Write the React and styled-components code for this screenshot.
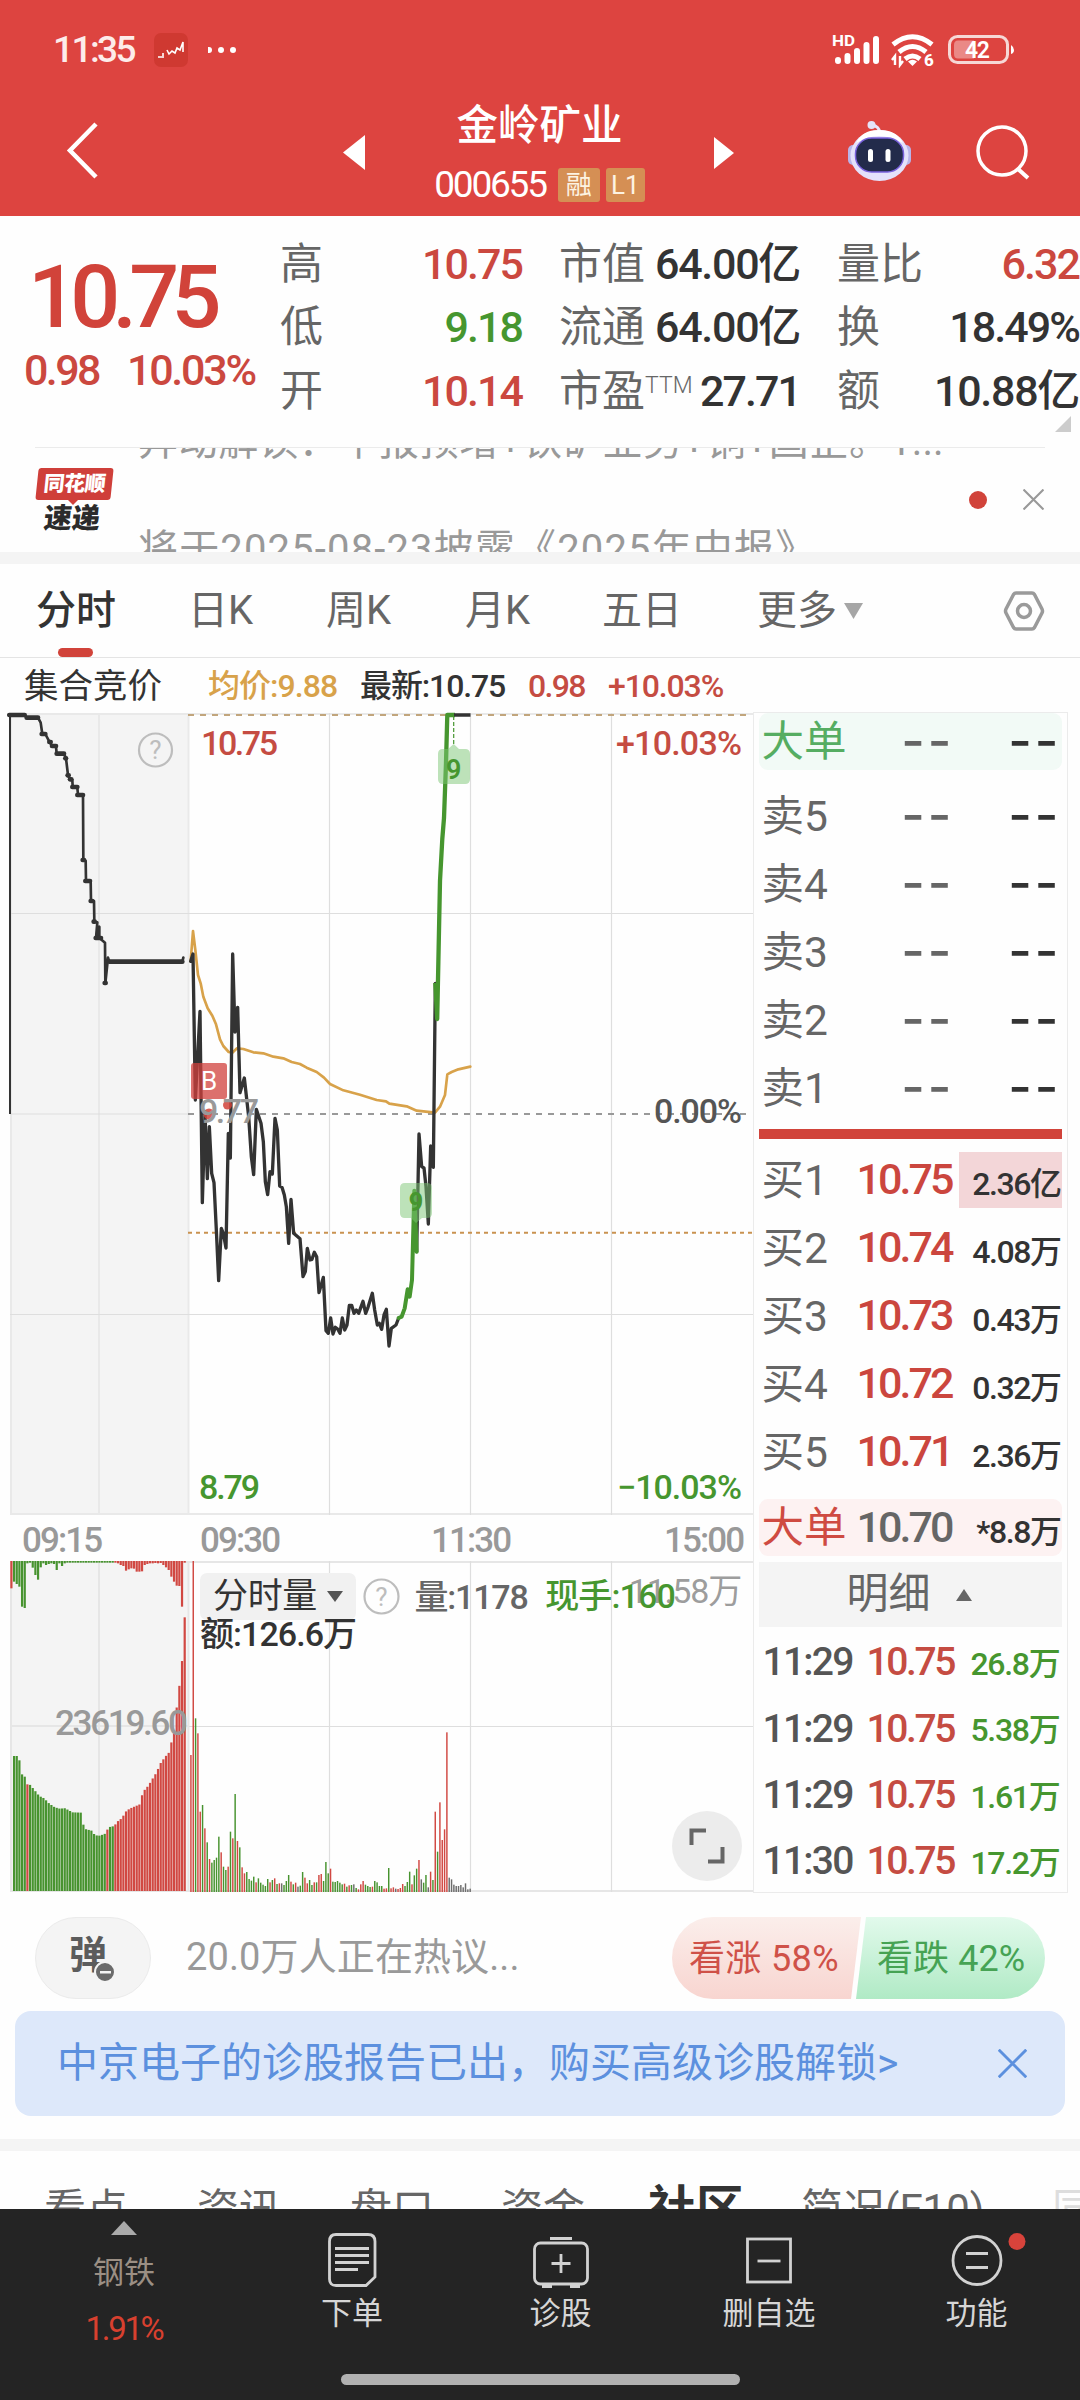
import React from 'react';
import styled, { createGlobalStyle, css } from 'styled-components';

const RED = '#d1433a';
const GREEN = '#46962f';
const INK = '#333333';
const GREY = '#666666';
const PALE = '#999999';
const FONT = 'Roboto, "Noto Sans CJK SC", sans-serif';

const GlobalStyle = createGlobalStyle`
  * { box-sizing: border-box; }
  body { margin: 0; background: #fff; font-family: ${FONT}; line-height: 1.2; }
  svg { display: block; flex: none; }
`;

const Page = styled.div`
  width: 1080px;
  height: 2400px;
  overflow: hidden;
  background: #fefefe;
  display: flex;
  flex-direction: column;
`;

const Txt = styled.span`
  font-size: ${(p) => p.$size || 32}px;
  font-weight: ${(p) => p.$weight || 400};
  color: ${(p) => p.$color || INK};
  letter-spacing: ${(p) => p.$track || 0}em;
  white-space: nowrap;
`;

const Num = styled(Txt)`
  font-weight: ${(p) => p.$weight || 500};
  letter-spacing: ${(p) => (p.$track === undefined ? -0.052 : p.$track)}em;
`;

/* ---------- header ---------- */

const Header = styled.header`
  height: 216px;
  flex: none;
  background: #dd4440;
  color: #fff;
`;

const StatusBar = styled.div`
  height: 100px;
  display: flex;
  align-items: center;
  padding: 0 66px 0 53px;
`;

const StatusGroup = styled.div`
  display: flex;
  align-items: center;
  gap: ${(p) => p.$gap}px;
  margin-left: ${(p) => (p.$end ? 'auto' : 0)};
`;

const NavBar = styled.div`
  height: 116px;
  display: grid;
  grid-template-columns: 343px 391px 1fr;
`;

const NavLeft = styled.div`
  padding: 21px 0 0 66px;
`;

const NavTitle = styled.div`
  display: flex;
  justify-content: space-between;
`;

const TitleStack = styled.div`
  display: flex;
  flex-direction: column;
  align-items: center;
`;

const StockName = styled.div`
  font-size: 41.500px;
  line-height: 51px;
  font-weight: 500;
`;

const CodeRow = styled.div`
  display: flex;
  align-items: center;
  height: 34px;
  margin-top: 17px;
  gap: 6px;
`;

const Badge = styled.span`
  height: 34px;
  width: ${(p) => p.$w}px;
  margin-left: ${(p) => p.$ml || 0}px;
  border-radius: 3px;
  background: #d58f54;
  color: #fdf3e2;
  font-size: 26px;
  line-height: 34px;
  text-align: center;
`;

const NavRight = styled.div`
  display: flex;
  gap: 63px;
  padding: 20px 0 0 114px;
`;

const ArrowBox = styled.div`
  padding-top: ${(p) => p.$top}px;
`;

function StatusIcons() {
  return (
    <svg width="184" height="36" viewBox="830 32 184 36">
      <text x="832" y="46" fontSize="15" fontWeight="700" fill="#fff" textLength="23" lengthAdjust="spacingAndGlyphs">HD</text>
      <g stroke="#fff" strokeWidth="6" strokeLinecap="round">
        <path d="M838 60V61M847.500 56V61M857 51V61M866.500 45V61M876 39V61" />
      </g>
      <g fill="none" stroke="#fff" strokeWidth="5">
        <path d="M893 44.500Q912.500 29 932 44.500" />
        <path d="M899 52Q912.500 41 926 52" />
        <path d="M905 59Q912.500 53 920 59" />
      </g>
      <path d="M908 61.500L912.500 66L917 61.500Q912.500 58 908 61.500Z" fill="#fff" />
      <path d="M895 65V56L892 60M900 56V65L903 61" stroke="#fff" strokeWidth="2.400" fill="none" />
      <text x="924" y="66" fontSize="17" fontWeight="800" fill="#fff">6</text>
      <rect x="949.500" y="36.500" width="58" height="26" rx="8" fill="none" stroke="#f6d8d6" strokeWidth="3" />
      <path d="M958 40.500H974V58.500H958Q954 58.500 954 54V45Q954 40.500 958 40.500Z" fill="#ea8986" />
      <text x="965" y="58" fontSize="23" fontWeight="600" fill="#fff" textLength="25">42</text>
      <path d="M1011 45Q1014 47 1014 50Q1014 53 1011 54Z" fill="#fff" />
    </svg>
  );
}

function Robot() {
  return (
    <svg width="64" height="62" viewBox="848 120 64 62">
      <path d="M880 133Q879 126 872 125" stroke="#e9e6fb" strokeWidth="3" fill="none" />
      <circle cx="871.500" cy="125" r="4" fill="#e5e3f8" />
      <rect x="848" y="145" width="10" height="20" rx="5" fill="#b9b5ea" />
      <rect x="901" y="145" width="10" height="20" rx="5" fill="#b9b5ea" />
      <ellipse cx="879.500" cy="155.500" rx="29" ry="25.500" fill="#e4e1fb" />
      <path d="M856 143Q862 130 879 130Q897 130 903 143Q890 136 879 136Q868 136 856 143Z" fill="#fff" />
      <rect x="855.500" y="138" width="48" height="34" rx="16" fill="#232b4b" stroke="#7a62dd" strokeWidth="1.500" />
      <rect x="868" y="149" width="5" height="13" rx="2.500" fill="#fff" />
      <rect x="885.500" y="149" width="5" height="13" rx="2.500" fill="#fff" />
    </svg>
  );
}

function AppHeader() {
  return (
    <Header>
      <StatusBar>
        <StatusGroup $gap={20}>
          <Num $size={37} $color="#fdecea" $track={-0.07}>11:35</Num>
          <svg width="34" height="34" viewBox="0 0 34 34">
            <rect width="34" height="34" rx="7" fill="#cf3931" />
            <path d="M4 24H8M9 20V25M13 17L15 21L18 18L21 20L23 15L26 17L29 9V19" stroke="#fff" strokeWidth="1.600" fill="none" />
          </svg>
          <svg width="32" height="8" viewBox="0 0 32 8" fill="#fff">
            <circle cx="1" cy="4" r="3" /><circle cx="13" cy="4" r="3" /><circle cx="25" cy="4" r="3" />
          </svg>
        </StatusGroup>
        <StatusGroup $end $gap={10}><StatusIcons /></StatusGroup>
      </StatusBar>
      <NavBar>
        <NavLeft>
          <svg width="34" height="60" viewBox="0 0 34 60"><path d="M30 3L4 29.500L30 56" fill="none" stroke="#fff" strokeWidth="4.500" /></svg>
        </NavLeft>
        <NavTitle>
          <ArrowBox $top={35}><svg width="22" height="35" viewBox="0 0 22 35"><path d="M22 0V35L0 17.500Z" fill="#fff" /></svg></ArrowBox>
          <TitleStack>
            <StockName>金岭矿业</StockName>
            <CodeRow>
              <Num $size={37} $color="#fff" $weight={400} $track={-0.06}>000655</Num>
              <Badge $w={42} $ml={6}>融</Badge>
              <Badge $w={39}>L1</Badge>
            </CodeRow>
          </TitleStack>
          <ArrowBox $top={37}><svg width="20" height="32" viewBox="0 0 20 32"><path d="M0 0L20 16L0 32Z" fill="#fff" /></svg></ArrowBox>
        </NavTitle>
        <NavRight>
          <Robot />
          <svg width="56" height="60" viewBox="974 120 56 60" fill="none" stroke="#fff" strokeWidth="3.500">
            <circle cx="1001" cy="151" r="24" /><path d="M1017 169L1027 178" strokeWidth="4" />
          </svg>
        </NavRight>
      </NavBar>
    </Header>
  );
}

/* ---------- quote ---------- */

const Quote = styled.section`
  height: 231px;
  flex: none;
  display: flex;
`;

const PriceBlock = styled.div`
  width: 280px;
  flex: none;
  padding-top: 35px;
`;

const BigPrice = styled.div`
  font-size: 88px;
  line-height: 91px;
  font-weight: 500;
  letter-spacing: -0.088em;
  color: ${RED};
  padding-left: 28px;
`;

const Change = styled.div`
  display: flex;
  gap: 28px;
  line-height: 50px;
  margin-top: 3px;
  padding-left: 24px;
`;

const Stats = styled.div`
  display: grid;
  grid-template-columns: 242px 241px 242px;
  grid-auto-rows: 63.500px;
  column-gap: 37px;
  padding-top: 17px;
  height: 208px;
`;

const Stat = styled.div`
  display: flex;
  align-items: center;
  justify-content: space-between;
`;

const Sup = styled.sup`
  font-size: 23px;
  font-weight: 300;
  vertical-align: 13px;
  line-height: 0;
`;

const Corner = styled.div`
  width: 0;
  height: 0;
  align-self: flex-end;
  margin: 0 0 15px -24px;
  border-left: 16px solid transparent;
  border-bottom: 16px solid #cccccc;
`;

const STATS = [
  ['高', '10.75', '#cb483f'], ['市值', '64.00亿', INK], ['量比', '6.32', '#cb483f'],
  ['低', '9.18', GREEN], ['流通', '64.00亿', INK], ['换', '18.49%', INK],
  ['开', '10.14', '#cb483f'], ['市盈', '27.71', INK, 'TTM'], ['额', '10.88亿', INK],
];

function QuotePanel() {
  return (
    <Quote>
      <PriceBlock>
        <BigPrice>10.75</BigPrice>
        <Change>
          <Num $size={43} $color="#cb483f" $track={-0.06}>0.98</Num>
          <Num $size={43} $color="#cb483f" $track={-0.052}>10.03%</Num>
        </Change>
      </PriceBlock>
      <Stats>
        {STATS.map(([label, value, color, sup]) => (
          <Stat key={label}>
            <Txt $size={43} $color={GREY}>{label}{sup && <Sup>{sup}</Sup>}</Txt>
            <Num $size={43} $color={color} $track={value.endsWith('亿') ? -0.03 : -0.045}>{value}</Num>
          </Stat>
        ))}
      </Stats>
      <Corner />
    </Quote>
  );
}

/* ---------- news ticker ---------- */

const Ticker = styled.section`
  height: 105px;
  flex: none;
  margin: 0 35px;
  border-top: 1px solid #ebebeb;
  display: flex;
  overflow: hidden;
`;

const NewsLogo = styled.div`
  width: 103px;
  padding-top: 20px;
`;

const LogoTop = styled.div`
  width: 75px;
  height: 32px;
  margin-left: 2px;
  background: #cf3f3a;
  border-radius: 3px;
  transform: skewX(-6deg);
  color: #fff;
  font-size: 21px;
  font-weight: 900;
  line-height: 32px;
  text-align: center;
  letter-spacing: -0.5px;
`;

const LogoTail = styled.div`
  width: 0;
  height: 0;
  margin-left: 33px;
  border: 5px solid transparent;
  border-top-color: #cf3f3a;
  border-bottom-width: 0;
`;

const LogoBottom = styled.div`
  color: #2b2b2b;
  font-size: 28px;
  font-weight: 900;
  line-height: 28px;
  margin: 0 0 0 9px;
  transform: skewX(-6deg);
`;

const TickerLines = styled.div`
  flex: 1;
  margin-top: -34px;
  display: flex;
  flex-direction: column;
  gap: 52px;
`;

const TickerLine = styled.div`
  font-size: 40px;
  line-height: 56px;
  color: ${PALE};
  white-space: nowrap;
  letter-spacing: ${(p) => p.$track || 0}px;
`;

const TickerEnd = styled.div`
  display: flex;
  align-items: center;
  height: 103px;
  gap: 36px;
  margin-right: 1px;
`;

const Dot = styled.div`
  width: 18px;
  height: 18px;
  border-radius: 50%;
  background: ${RED};
`;

function Cross({ size, width, color }) {
  return (
    <svg width={size} height={size} viewBox="0 0 20 20"><path d="M0.500 0.500L19.500 19.500M19.500 0.500L0.500 19.500" stroke={color} strokeWidth={width} /></svg>
  );
}

const Divider = styled.div`
  height: 12px;
  flex: none;
  background: #f4f4f4;
`;

/* ---------- chart tabs ---------- */

const Tabs = styled.nav`
  height: 94px;
  flex: none;
  border-bottom: 1px solid #e4e4e4;
  display: flex;
  padding: 0 35px 0 36px;
`;

const Tab = styled.div`
  width: ${(p) => p.$w}px;
  height: 93px;
  display: flex;
  flex-direction: column;
  justify-content: space-between;
  font-size: 40px;
  line-height: 52px;
  padding-top: 21px;
  color: ${(p) => (p.$on ? INK : GREY)};
  font-weight: ${(p) => (p.$on ? 500 : 400)};
  white-space: nowrap;
`;

const Underline = styled.i`
  width: 35px;
  height: 9px;
  border-radius: 5px;
  margin-left: 22px;
  background: ${RED};
`;

const MoreRow = styled.div`
  display: flex;
  align-items: center;
  gap: 7px;
`;

const TabSettings = styled.div`
  margin-left: auto;
  padding-top: 27px;
`;

const InfoRow = styled.div`
  height: 54px;
  flex: none;
  display: flex;
  align-items: center;
  padding: 1px 0 0 24px;
`;

const InfoCell = styled.div`
  width: ${(p) => p.$w}px;
  display: flex;
  align-items: center;
  height: 54px;
  line-height: 54px;
`;

/* ---------- chart area ---------- */

const Board = styled.section`
  height: 1181px;
  flex: none;
  display: flex;
`;

const ChartColumn = styled.div`
  width: 753px;
  display: flex;
  flex-direction: column;
`;

const TimeAxis = styled.div`
  height: 46px;
  display: grid;
  grid-template-columns: 178px 231px 233px 1fr;
  padding: 0 11px 0 22px;
  line-height: 52px;
`;

const VolumeBox = styled.div`
  position: relative;
  height: 332px;
`;

const VolumeLegend = styled.div`
  position: absolute;
  left: 200px;
  top: 12px;
`;

const LegendRow = styled.div`
  display: flex;
  align-items: center;
  height: ${(p) => p.$h}px;
`;

const Chip = styled.div`
  display: flex;
  align-items: center;
  gap: 10px;
  width: 156px;
  height: 47px;
  padding-left: 13px;
  border-radius: 7px;
  background: #f1f1f1;
  margin-right: 7px;
`;

const Expand = styled.div`
  position: absolute;
  right: 11px;
  bottom: 12px;
  width: 70px;
  height: 70px;
  border-radius: 50%;
  background: #ececec;
  display: flex;
  align-items: center;
  justify-content: center;
`;

const ChartText = styled.text`
  font-family: ${FONT};
  font-size: ${(p) => p.$size || 34}px;
  font-weight: 500;
`;

const PRICE_A = '32,184 39,162 46,600 60,334 67,908 75,640 82,836 88,680 95,820 102,848 109,990 116,1142 124,985 130,1000 138,1044 145,700 151,774 158,162 165,396 173,322 180,578 193,534 206,650 214,770 221,824 229,628 243,670 250,725 256,845 263,884 270,815 277,822 285,655 292,690 299,858 306,862 313,885 319,920 326,1030 333,898 341,1000 348,1006 360,1016 369,1130 376,1115 382,1045 390,1080 396,1078 403,1057 410,1070 417,1178 430,1132 438,1292 445,1300 452,1254 459,1302 466,1282 473,1287 480,1300 487,1254 494,1290 501,1275 508,1216 515,1216 522,1240 529,1230 536,1240 549,1204 557,1240 564,1222 577,1180 584,1230 592,1275 598,1270 605,1288 612,1245 619,1228 627,1338 634,1285 648,1275 656,1254';
const PRICE_B = '710,1055 717,702 725,800 732,804 738,860 745,972 752,738 760,802 766,250';
const PRICE_UP = '656,1254 665,1250 674,1225 683,1168 689,1190 696,1140 703,872 710,1055';
const AVERAGE = '32,184 39,93 46,150 54,225 62,250 70,290 83,325 97,347 108,373 120,418 130,438 146,456 157,458 171,445 190,447 220,457 250,460 280,470 310,475 335,486 360,492 380,503 410,516 432,533 450,552 490,571 540,584 590,600 618,604 628,611 680,619 710,632 765,638 780,620 795,585 802,523 815,516 835,508 871,500';
const AUCTION = '26,45 74,45 80,53 114,53 122,68 127,102 136,102 148,125 156,137 168,140 170,161 192,161 198,175 204,225 210,238 217,240 218,260 232,262 234,285 249,285 250,480 257,482 258,543 272,543 273,603 282,603 283,665 292,667 288,714 298,680 298,714 308,722 315,728 316,850 324,773 328,785 547,785 550,773';
const AUCTION_MARKS = [[28, 45, 74], [80, 53, 114], [125, 102, 136], [148, 126, 152], [156, 138, 168], [170, 161, 192], [196, 175, 198], [203, 226, 206], [210, 238, 214], [217, 261, 232], [232, 285, 249], [248, 480, 252], [256, 543, 270], [272, 603, 277], [281, 665, 284], [287, 714, 303], [314, 849, 317], [328, 785, 547]];

function HelpMark({ cx, cy, r }) {
  return (
    <g>
      <circle cx={cx} cy={cy} r={r - 1} fill="none" stroke="#bdbdbd" strokeWidth="2.200" />
      <text x={cx} y={cy + 9} fontSize="26" textAnchor="middle" fill="#bdbdbd">?</text>
    </g>
  );
}

function PriceChart() {
  return (
    <svg width="753" height="803" viewBox="0 712 753 803">
      <rect x="10" y="713" width="179" height="802" fill="#f4f4f4" />
      <g stroke="#e9e9e9" strokeWidth="2">
        <path d="M11 713V1515M99 713V1515M188.500 713V1515" />
        <path d="M10 714H753M10 1514H753" />
      </g>
      <g stroke="#dedede" strokeWidth="1.200">
        <path d="M10 913.500H753M10 1314.500H753M10 1114H189" />
        <path d="M329.500 713V1515M470.500 713V1515M611.500 713V1515" />
      </g>
      <path d="M188 715H752" stroke="#c1a57c" strokeWidth="2" strokeDasharray="6 6" />
      <path d="M188 1114H752" stroke="#999" strokeWidth="1.800" strokeDasharray="6 6" />
      <path d="M188 1232.700H752" stroke="#c99250" strokeWidth="2" strokeDasharray="4 4" />
      <g transform="translate(0 700) scale(0.333333)" fill="none" stroke="#333" strokeLinejoin="round" strokeLinecap="round">
        <path d="M30 45V1242" strokeWidth="6" strokeLinecap="butt" />
        <polyline points={AUCTION} strokeWidth="8" />
        {AUCTION_MARKS.map(([x, y, x2]) => <path key={`${x}-${y}`} d={`M${x} ${y}H${x2}`} strokeWidth="14" />)}
      </g>
      <g transform="translate(180 900) scale(0.333333)" fill="none" strokeLinejoin="round" strokeLinecap="round">
        <polyline points={AVERAGE} stroke="#d8a24a" strokeWidth="8" />
        <polyline points={PRICE_A} stroke="#333" strokeWidth="10" />
        <polyline points={PRICE_B} stroke="#333" strokeWidth="10" />
        <polyline points={PRICE_UP} stroke={GREEN} strokeWidth="12" />
      </g>
      <path d="M435.300 983L437.200 1019L440 881L442.300 839L444 818L446 763L447.300 715H455" fill="none" stroke={GREEN} strokeWidth="4.300" strokeLinejoin="round" />
      <path d="M454 715H470.500" stroke="#333" strokeWidth="3.500" />
      <path d="M453.700 716V745" stroke={GREEN} strokeWidth="1.200" strokeDasharray="4 2" />
      <g fill="#7cc574" fillOpacity="0.500">
        <path d="M443 749H448L453.700 744L459 749H465Q470 749 470 754V779Q470 784 465 784H443Q438 784 438 779V754Q438 749 443 749Z" />
        <path d="M405 1183H427Q432 1183 432 1188V1213Q432 1218 427 1218H422L416 1223L411 1218H405Q400 1218 400 1213V1188Q400 1183 405 1183Z" />
      </g>
      <text x="453.700" y="779" fontSize="27" fontWeight="600" textAnchor="middle" fill={GREEN}>9</text>
      <text x="416" y="1211" fontSize="25" fontWeight="800" textAnchor="middle" fill={GREEN}>9</text>
      <rect x="191" y="1063" width="36" height="36" rx="3" fill="#d0403c" fillOpacity="0.750" />
      <circle cx="227.500" cy="1105" r="4.500" fill={RED} fillOpacity="0.850" />
      <circle cx="209" cy="1114" r="5.500" fill={RED} fillOpacity="0.850" />
      <text x="209" y="1090" fontSize="26" textAnchor="middle" fill="#fff">B</text>
      <ChartText x="199" y="1123" fill={PALE} textLength="60">9.77</ChartText>
      <HelpMark cx={155.5} cy={750} r={17.5} />
      <ChartText x="201" y="754.500" fill="#c54c42" textLength="77">10.75</ChartText>
      <ChartText x="616" y="754.500" fill="#c54c42" textLength="126">+10.03%</ChartText>
      <ChartText x="654" y="1122.500" fill="#555" textLength="88">0.00%</ChartText>
      <ChartText x="199" y="1499" fill={GREEN} textLength="61">8.79</ChartText>
      <ChartText x="617" y="1499" fill={GREEN} textLength="125">−10.03%</ChartText>
    </svg>
  );
}

/* Envelope of the auction bars, interpolated to one bar each 5.5 units. */
const ENVELOPE = [[22, 828], [38, 828], [42, 880], [50, 890], [53, 913], [60, 913], [70, 930], [80, 948], [90, 955], [100, 970], [112, 982], [125, 987], [130, 983], [140, 990], [148, 997], [168, 998], [172, 1046], [188, 1052], [195, 1066], [205, 1067], [218, 1060], [222, 1042], [235, 1038], [240, 1026], [250, 1015], [260, 992], [268, 985], [289, 972], [293, 937], [305, 917], [315, 893], [322, 877], [330, 850], [340, 830], [348, 817], [353, 784], [358, 755], [362, 700], [368, 630], [374, 555], [380, 412]];

const HANGING = [325, 305, 312, 320, 380, 384, 250, 248, 263, 285, 299, 262, 250, 255, 252, 250, 252, 270, 250, 258, 250, 248, 248, 248, 248, 248, 248, 248, 248, 248, 248, 248, 248, 248, 248, 248, 248, 248, 248, 248, 250, 255, 258, 272, 268, 265, 266, 275, 275, 274, 255, 252, 250, 250, 249, 250, 249, 255, 262, 270, 290, 305, 317, 318, 380, 248];

const MINUTES = 'r825 r243 g715 r760 r995 g975 r1045 g1087 r1137 g1148 g1140 g1133 g1070 r1117 g1160 g1170 r1160 g1055 r1075 g942 r1083 g1102 r1162 r1180 g1176 g1197 g1202 g1190 r1207 g1195 g1208 g1214 g1218 g1197 r1207 g1200 r1195 g1212 r1210 k1210 g1215 g1203 g1185 r1205 g1213 r1208 k1220 g1217 g1176 r1193 r1210 g1200 g1215 r1207 g1207 r1185 r1182 g1203 g1146 g1180 r1166 g1205 g1206 g1203 g1208 g1213 r1211 g1220 r1216 g1215 k1213 g1224 r1228 r1213 r1203 g1214 g1218 g1221 r1220 g1203 g1207 g1218 g1218 r1226 r1225 g1164 r1225 r1222 k1226 r1227 r1224 r1212 g1218 g1206 g1175 r1213 g1186 g1166 r1140 k1198 g1208 g1185 k1222 r1175 g1200 r995 g1115 r967 r1080 r1048 r757 k1193 k1198 k1214 k1218 k1218 k1215 k1222 k1210 k1228 k1226'.split(' ');

const BAR_COLORS = { r: '#d14842', g: '#47932f', k: '#6d6d6d' };

function envelopeAt(x) {
  for (let i = 1; i < ENVELOPE.length; i += 1) {
    const [x0, y0] = ENVELOPE[i - 1];
    const [x1, y1] = ENVELOPE[i];
    if (x <= x1) return y0 + ((x - x0) / (x1 - x0)) * (y1 - y0);
  }
  return 412;
}

function auctionColor(x) {
  if (x > 236) return BAR_COLORS.r;
  if (Math.abs(x - 55) < 2.7 || Math.abs(x - 222) < 2.7) return BAR_COLORS.r;
  return BAR_COLORS.g;
}

function VolumeChart() {
  const px = (x) => x / 2.063;
  const py = (y) => 1480 + y / 3;
  const slots = HANGING.map((y, i) => ({ y, x: 22.5 + i * 5.5 }));
  return (
    <svg width="753" height="332" viewBox="0 1561 753 332">
      <rect x="10" y="1561" width="179" height="330" fill="#f4f4f4" />
      <g stroke="#e6e6e6" strokeWidth="2">
        <path d="M11 1561V1892M99 1561V1892M188.500 1561V1892" />
        <path d="M10 1562H753M10 1891H753M10 1726H189" />
      </g>
      <g stroke="#dedede" strokeWidth="1.200">
        <path d="M189 1726.500H753M329.500 1561V1892M470.500 1561V1892M611.500 1561V1892" />
      </g>
      {slots.slice(1).map(({ x }) => (
        <rect key={x} x={px(x) - 0.6} y={py(envelopeAt(x))} width="2.200" height={1891 - py(envelopeAt(x))} fill={auctionColor(x)} />
      ))}
      {slots.map(({ x, y }, i) => (
        <rect key={x} x={px(x) - 0.6} y="1561" width="2.200" height={py(y) - 1561} fill={i === 0 || x > 236 ? BAR_COLORS.r : BAR_COLORS.g} />
      ))}
      {MINUTES.map((m, i) => {
        const y = py(Number(m.slice(1)));
        return <rect key={i} x={190.2 + i * 2.327} y={y} width="1.450" height={1892 - y} fill={BAR_COLORS[m[0]]} />;
      })}
      <ChartText x="55" y="1735" $size={35} fill={PALE} textLength="133">23619.60</ChartText>
    </svg>
  );
}

const Over = styled.div`
  position: absolute;
  right: 12px;
  top: 6px;
  line-height: 48px;
`;

function Triangle({ w, h, color, up }) {
  return (
    <svg width={w} height={h} viewBox="0 0 10 10" preserveAspectRatio="none">
      <path d={up ? 'M0 10L5 0L10 10Z' : 'M0 0H10L5 10Z'} fill={color} />
    </svg>
  );
}

function VolumePanel() {
  return (
    <VolumeBox>
      <VolumeChart />
      <VolumeLegend>
        <LegendRow $h={47}>
          <Chip><Txt $size={35} $track={-0.01}>分时量</Txt><Triangle w={16} h={11} color="#555" /></Chip>
          <svg width="37" height="37" viewBox="0 0 37 37"><HelpMark cx={18.5} cy={18.5} r={18} /></svg>
          <InfoCell $w={130}><Txt $size={34} $color={GREY} $weight={500} $track={-0.035}>&nbsp;&nbsp;量:1178</Txt></InfoCell>
          <Txt $size={34} $color={GREEN} $weight={500} $track={-0.025}>&nbsp;&nbsp;现手:160</Txt>
        </LegendRow>
        <LegendRow $h={28}><Txt $size={34} $weight={500} $track={-0.028}>额:126.6万</Txt></LegendRow>
      </VolumeLegend>
      <Over><Txt $size={34} $color="rgba(130,130,130,0.8)" $track={-0.035}>11.58万</Txt></Over>
      <Expand>
        <svg width="36" height="36" viewBox="0 0 36 36" fill="none" stroke="#666" strokeWidth="4">
          <path d="M2.500 17V2.500H17M33.500 19V33.500H19" />
        </svg>
      </Expand>
    </VolumeBox>
  );
}

/* ---------- order book ---------- */

const Book = styled.aside`
  width: 315px;
  border: 1.5px solid #ebebeb;
  padding: 0 5.5px 0 4.5px;
  display: flex;
  flex-direction: column;
`;

const BookRow = styled.div`
  height: 68px;
  display: flex;
  align-items: center;
  padding-left: 3px;
  flex: none;
  ${(p) => p.$tint && css`
    height: 57px;
    border-radius: 9px;
    background: ${p.$tint};
  `}
`;

const BookLabel = styled.div`
  width: 95px;
  flex: none;
  font-size: 42.500px;
  color: ${(p) => p.$color || GREY};
  white-space: nowrap;
`;

const BookPrice = styled.div`
  width: 102px;
  flex: none;
  font-size: 43px;
  font-weight: 500;
  letter-spacing: -0.068em;
  color: ${(p) => p.$color || '#cb463e'};
`;

const BookQty = styled.div`
  flex: 1;
  height: 56px;
  line-height: 64px;
  text-align: right;
  padding-right: 1px;
  font-size: 32px;
  font-weight: 500;
  letter-spacing: -0.045em;
  white-space: nowrap;
  color: ${(p) => p.$color || INK};
  background: ${(p) => (p.$hot ? '#f3d6d8' : 'transparent')};
`;

const DashPair = styled.div`
  flex: 1;
  display: grid;
  grid-template-columns: 98px 107px;
`;

const Dashes = styled.div`
  text-align: right;
  font-family: Inter, sans-serif;
  font-size: 51px;
  font-weight: 500;
  letter-spacing: 0.06em;
  line-height: 50px;
  padding-bottom: 2px;
  color: ${(p) => p.$color};
`;

const SideBar = styled.div`
  height: 10px;
  flex: none;
  background: ${RED};
`;

const Gap = styled.div`
  height: ${(p) => p.$h}px;
  flex: none;
`;

const DetailBar = styled.div`
  height: 65px;
  flex: none;
  background: #f4f4f4;
  display: flex;
  align-items: center;
  justify-content: center;
  gap: 25px;
  padding-right: 2px;
`;

const Trade = styled.div`
  height: 66.300px;
  flex: none;
  display: grid;
  grid-template-columns: 104px 88px 1fr;
  align-items: center;
  padding: 5px 0 0 4px;
`;

const TradeText = styled.span`
  font-size: ${(p) => (p.$qty ? 32 : 39)}px;
  font-weight: 500;
  letter-spacing: ${(p) => p.$track}em;
  text-align: ${(p) => (p.$qty ? 'right' : 'left')};
  padding: ${(p) => (p.$qty ? '3px 2px 0 0' : 0)};
  color: ${(p) => p.$color};
  white-space: nowrap;
`;

const BUYS = [['买1', '10.75', '2.36亿'], ['买2', '10.74', '4.08万'], ['买3', '10.73', '0.43万'], ['买4', '10.72', '0.32万'], ['买5', '10.71', '2.36万']];
const TRADES = [['11:29', '26.8万'], ['11:29', '5.38万'], ['11:29', '1.61万'], ['11:30', '17.2万']];

function EmptyQuote() {
  return (
    <DashPair>
      <Dashes $color={GREY}>--</Dashes>
      <Dashes $color={INK}>--</Dashes>
    </DashPair>
  );
}

function OrderBook() {
  return (
    <Book>
      <BookRow $tint="#f2faf6"><BookLabel $color="#56ad62">大单</BookLabel><EmptyQuote /></BookRow>
      <Gap $h={12} />
      {['卖5', '卖4', '卖3', '卖2', '卖1'].map((s) => (
        <BookRow key={s}><BookLabel>{s}</BookLabel><EmptyQuote /></BookRow>
      ))}
      <Gap $h={7} />
      <SideBar />
      <Gap $h={7} />
      {BUYS.map(([side, price, qty], i) => (
        <BookRow key={side}>
          <BookLabel>{side}</BookLabel><BookPrice>{price}</BookPrice>
          <BookQty $hot={i === 0}>{qty}</BookQty>
        </BookRow>
      ))}
      <Gap $h={13} />
      <BookRow $tint="#fdf2f2">
        <BookLabel $color="#cf4b42">大单</BookLabel><BookPrice $color={GREY}>10.70</BookPrice><BookQty>*8.8万</BookQty>
      </BookRow>
      <Gap $h={6} />
      <DetailBar><Txt $size={42} $color={GREY}>明细</Txt><Triangle up w={16} h={12} color="#666" /></DetailBar>
      {TRADES.map(([time, qty], i) => (
        <Trade key={i}>
          <TradeText $color="#555" $track={-0.045}>{time}</TradeText>
          <TradeText $color="#c54c42" $track={-0.062}>10.75</TradeText>
          <TradeText $qty $color={GREEN} $track={-0.04}>{qty}</TradeText>
        </Trade>
      ))}
    </Book>
  );
}

/* ---------- discussion, banner, lower tabs ---------- */

const Discuss = styled.section`
  height: 82px;
  flex: none;
  margin: 24px 35px 12px;
  display: flex;
  align-items: center;
`;

const BulletPill = styled.div`
  width: 116px;
  height: 82px;
  border-radius: 41px;
  background: #f4f4f4;
  border: 1px solid #ebebeb;
  display: flex;
  align-items: center;
  padding: 0 0 4px 33px;
  margin-right: 35px;
`;

const MinusDot = styled.i`
  width: 22px;
  height: 22px;
  margin: 32px 0 0 -13px;
  border-radius: 50%;
  background: linear-gradient(#f4f4f4, #f4f4f4) center / 11px 2.5px no-repeat, #6b6b6b;
  border: 2px solid #f4f4f4;
  flex: none;
`;

const Vote = styled.div`
  margin-left: auto;
  width: 373px;
  height: 82px;
  border-radius: 41px;
  overflow: hidden;
  display: flex;
`;

const VoteSide = styled.div`
  width: ${(p) => p.$w}px;
  margin-left: ${(p) => p.$ml || 0}px;
  flex: none;
  background: ${(p) => p.$bg};
  clip-path: ${(p) => p.$clip};
  color: ${(p) => p.$color};
  font-size: 36px;
  line-height: 84px;
  padding-left: ${(p) => p.$pl}px;
  letter-spacing: ${(p) => p.$track}em;
  white-space: nowrap;
`;

const Banner = styled.section`
  height: 105px;
  flex: none;
  margin: 0 15px 23px;
  border-radius: 16px;
  background: #dde8fa;
  display: flex;
  align-items: center;
  justify-content: space-between;
  padding: 0 38px 0 42px;
`;

const LowerTabs = styled.nav`
  height: 58px;
  flex: none;
  overflow: hidden;
  display: grid;
  grid-template-columns: 153px 153px 151px 147px 153px 251px 1fr;
  padding-left: 44px;
`;

const LowerTab = styled.div`
  margin-top: ${(p) => (p.$on ? 33 : 34)}px;
  line-height: 50px;
  font-size: ${(p) => (p.$on ? 48 : 42)}px;
  font-weight: ${(p) => (p.$on ? 700 : 400)};
  color: ${(p) => (p.$on ? INK : p.$faint ? '#dddddd' : GREY)};
  white-space: nowrap;
`;

/* ---------- bottom bar ---------- */

const Bottom = styled.footer`
  height: 191px;
  flex: none;
  background: #242424;
  display: flex;
  flex-direction: column;
  align-items: center;
`;

const BottomItems = styled.div`
  width: 1080px;
  height: 165px;
  display: grid;
  grid-template-columns: 248px 208px 209px 208px 207px;
`;

const Item = styled.div`
  display: flex;
  flex-direction: column;
  align-items: center;
  padding-top: ${(p) => p.$top}px;
  font-size: 31px;
  line-height: 36px;
  color: #d6d6d6;
  gap: ${(p) => p.$gap}px;
`;

const HomeBar = styled.div`
  width: 399px;
  height: 11px;
  border-radius: 6px;
  background: #b1b1b1;
`;

const ICONS = {
  下单: (
    <g>
      <path d="M12 2.500H44Q51 2.500 51 9.500V45L42 53.500H12Q5.500 53.500 5.500 47V9.500Q5.500 2.500 12 2.500Z" />
      <path d="M11 16.500H45M11 23.500H45M11 30.500H45M11 37.500H34" />
    </g>
  ),
  诊股: (
    <g>
      <rect x="1.500" y="11" width="53" height="41" rx="6" />
      <path d="M17 6.500H39M28 22V41M18.500 31.500H37.500" />
      <path d="M9 54H19M37 54H47" strokeWidth="4" />
    </g>
  ),
  删自选: (
    <g>
      <rect x="6.500" y="7" width="43" height="43" />
      <path d="M16.500 29H39.500" />
    </g>
  ),
  功能: (
    <g>
      <circle cx="28" cy="28.500" r="24" />
      <path d="M17 21.500H39M17 35.500H39" />
      <circle cx="68" cy="9.500" r="8.500" fill="#d8433b" stroke="none" />
    </g>
  ),
};

const BarIcon = styled.svg`
  overflow: visible;
`;

export default function App() {
  return (
    <Page>
      <GlobalStyle />
      <AppHeader />
      <QuotePanel />
      <Ticker>
        <NewsLogo>
          <LogoTop>同花顺</LogoTop>
          <LogoTail />
          <LogoBottom>速递</LogoBottom>
        </NewsLogo>
        <TickerLines>
          <TickerLine $track={0.15}>异动解读：中报预增+铁矿业务+铜+国企。1...</TickerLine>
          <TickerLine $track={1.15}>将于2025-08-23披露《2025年中报》</TickerLine>
        </TickerLines>
        <TickerEnd><Dot /><Cross size={21} width={2} color="#999" /></TickerEnd>
      </Ticker>
      <Divider />
      <Tabs>
        <Tab $w={152} $on>分时<Underline /></Tab>
        <Tab $w={138}>日K</Tab>
        <Tab $w={139}>周K</Tab>
        <Tab $w={137}>月K</Tab>
        <Tab $w={155}>五日</Tab>
        <Tab $w={120}><MoreRow>更多<Triangle w={19} h={16} color="#a6a6a6" /></MoreRow></Tab>
        <TabSettings>
          <svg width="42" height="40" viewBox="0 0 42 40" fill="none" stroke="#9a9a9a" strokeWidth="3.500" strokeLinejoin="round">
            <path d="M13 2H29Q30.500 2 31.500 3.500L39 18Q40 20 39 22L31.500 36.500Q30.500 38 29 38H13Q11.500 38 10.500 36.500L3 22Q2 20 3 18L10.500 3.500Q11.500 2 13 2Z" />
            <circle cx="21" cy="20" r="6.500" />
          </svg>
        </TabSettings>
      </Tabs>
      <InfoRow>
        <InfoCell $w={184}><Txt $size={34.5}>集合竞价</Txt></InfoCell>
        <InfoCell $w={152}><Num $size={32} $color="#d8a24a" $track={-0.03}>均价:9.88</Num></InfoCell>
        <InfoCell $w={168}><Num $size={32} $track={-0.035}>最新:10.75</Num></InfoCell>
        <InfoCell $w={80}><Num $size={32} $color="#c54c42">0.98</Num></InfoCell>
        <InfoCell $w={140}><Num $size={32} $color="#c54c42" $track={-0.035}>+10.03%</Num></InfoCell>
      </InfoRow>
      <Board>
        <ChartColumn>
          <PriceChart />
          <TimeAxis>
            {['09:15', '09:30', '11:30', '15:00'].map((t) => <Num key={t} $size={35} $color={PALE} $track={-0.055}>{t}</Num>)}
          </TimeAxis>
          <VolumePanel />
        </ChartColumn>
        <OrderBook />
      </Board>
      <Discuss>
        <BulletPill><Txt $size={38} $weight={700} $color="#5c5c5c">弹</Txt><MinusDot /></BulletPill>
        <Txt $size={38} $color={PALE} $track={0.003}>20.0万人正在热议...</Txt>
        <Vote>
          <VoteSide $w={189} $pl={17} $track={0.01} $color="#cf5148" $bg="linear-gradient(#fbeeeb,#f8d5d0)" $clip="polygon(0 0, 100% 0, 179px 100%, 0 100%)">看涨 58%</VoteSide>
          <VoteSide $w={189} $ml={-5} $pl={21} $track={0.002} $color="#46a354" $bg="linear-gradient(#e2faec,#b0eac5)" $clip="polygon(10px 0, 100% 0, 100% 100%, 0 100%)">看跌 42%</VoteSide>
        </Vote>
      </Discuss>
      <Banner>
        <Txt $size={41} $color="#5c90de">中京电子的诊股报告已出，购买高级诊股解锁&gt;</Txt>
        <Cross size={29} width={2} color="#5c90de" />
      </Banner>
      <Divider />
      <LowerTabs>
        <LowerTab>看点</LowerTab>
        <LowerTab>资讯</LowerTab>
        <LowerTab>盘口</LowerTab>
        <LowerTab>资金</LowerTab>
        <LowerTab $on>社区</LowerTab>
        <LowerTab>简况(F10)</LowerTab>
        <LowerTab $faint>同</LowerTab>
      </LowerTabs>
      <Bottom>
        <BottomItems>
          <Item $top={12} $gap={20}>
            <Triangle up w={26} h={14} color="#aaaaaa" />
            <Txt $size={31} $color="#9b8f84">钢铁</Txt>
            <Txt $size={33} $color="#d8402f" $track={-0.07}>1.91%</Txt>
          </Item>
          {Object.keys(ICONS).map((name) => (
            <Item key={name} $top={23} $gap={8}>
              <BarIcon width="56" height="56" viewBox="0 0 56 56" fill="none" stroke="#d2d2d2" strokeWidth="2.800">{ICONS[name]}</BarIcon>
              {name}
            </Item>
          ))}
        </BottomItems>
        <HomeBar />
      </Bottom>
    </Page>
  );
}
